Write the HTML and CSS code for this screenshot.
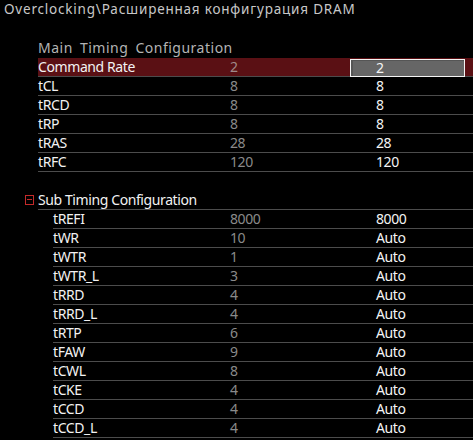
FILE: index.html
```html
<!DOCTYPE html>
<html>
<head>
<meta charset="utf-8">
<link rel="stylesheet" href="styles.css">
</head>
<body>
<div class="screen">
  <div class="title">Overclocking\Расширенная конфигурация DRAM</div>

  <section class="group main">
    <div class="main-head">Main Timing Configuration</div>
    <div class="row selected"><span class="name">Command Rate</span><span class="def">2</span><span class="cur"><span class="box">2</span></span></div>
    <div class="row"><span class="name">tCL</span><span class="def">8</span><span class="cur">8</span></div>
    <div class="row"><span class="name">tRCD</span><span class="def">8</span><span class="cur">8</span></div>
    <div class="row"><span class="name">tRP</span><span class="def">8</span><span class="cur">8</span></div>
    <div class="row"><span class="name">tRAS</span><span class="def">28</span><span class="cur">28</span></div>
    <div class="row"><span class="name">tRFC</span><span class="def">120</span><span class="cur">120</span></div>
  </section>

  <section class="group sub">
    <div class="sub-head"><span class="toggle"></span><span class="sub-title">Sub Timing Configuration</span></div>
    <div class="rows">
      <div class="row"><span class="name">tREFI</span><span class="def">8000</span><span class="cur">8000</span></div>
      <div class="row"><span class="name">tWR</span><span class="def">10</span><span class="cur">Auto</span></div>
      <div class="row"><span class="name">tWTR</span><span class="def">1</span><span class="cur">Auto</span></div>
      <div class="row"><span class="name">tWTR_L</span><span class="def">3</span><span class="cur">Auto</span></div>
      <div class="row"><span class="name">tRRD</span><span class="def">4</span><span class="cur">Auto</span></div>
      <div class="row"><span class="name">tRRD_L</span><span class="def">4</span><span class="cur">Auto</span></div>
      <div class="row"><span class="name">tRTP</span><span class="def">6</span><span class="cur">Auto</span></div>
      <div class="row"><span class="name">tFAW</span><span class="def">9</span><span class="cur">Auto</span></div>
      <div class="row"><span class="name">tCWL</span><span class="def">8</span><span class="cur">Auto</span></div>
      <div class="row"><span class="name">tCKE</span><span class="def">4</span><span class="cur">Auto</span></div>
      <div class="row"><span class="name">tCCD</span><span class="def">4</span><span class="cur">Auto</span></div>
      <div class="row"><span class="name">tCCD_L</span><span class="def">4</span><span class="cur">Auto</span></div>
    </div>
  </section>
</div>
</body>
</html>
```

FILE: styles.css
```css
html, body {
  margin: 0;
  padding: 0;
  background: #000;
}

.screen {
  width: 473px;
  height: 440px;
  overflow: hidden;
  background: #000;
  font-family: "Noto Sans", "Open Sans", sans-serif;
  font-size: 14px;
  letter-spacing: -0.4px;
  color: #f0f0f0;
}

.title {
  padding-left: 4px;
  height: 18px;
  line-height: 18px;
  font-size: 13.5px;
  letter-spacing: 0.8px;
  color: #c8c8c8;
  white-space: nowrap;
}

.main {
  margin-top: 20px;
  margin-left: 38px;
}

.main-head {
  height: 20px;
  line-height: 19px;
  color: #b4b4b4;
  letter-spacing: 0.5px;
  word-spacing: 3px;
}

.row {
  display: grid;
  height: 18px;
  line-height: 18px;
  border-bottom: 1px solid #4c4c4c;
  white-space: nowrap;
}

.main .row {
  grid-template-columns: 192px 120px 1fr;
}

.name {
  color: #f2f2f2;
}

.def {
  color: #8a8a8a;
}

.cur {
  padding-left: 26px;
  color: #f4f4f4;
}

.row.selected {
  background: #5a1014;
}

.row.selected .def {
  color: #a08a8a;
}

.row.selected .cur {
  padding-left: 0;
}

.box {
  display: block;
  box-sizing: border-box;
  width: 115px;
  height: 18px;
  margin-top: 1px;
  line-height: 16px;
  padding-left: 25px;
  border: 1px solid #f4f4f4;
  background: #666;
  box-shadow: inset 2px 1px 0 #555;
  color: #f4f4f4;
}

.sub {
  margin-top: 19px;
}

.sub-head {
  display: flex;
  align-items: flex-start;
  padding-left: 25px;
}

.toggle {
  position: relative;
  box-sizing: border-box;
  width: 9px;
  height: 10px;
  margin-top: 4px;
  margin-right: 4px;
  border: 1px solid #c42a2a;
}

.toggle::after {
  content: "";
  position: absolute;
  left: 1px;
  right: 1px;
  top: 3px;
  height: 1px;
  background: #c42a2a;
}

.sub-title {
  flex: 1;
  height: 18px;
  line-height: 18px;
  border-bottom: 1px solid #4c4c4c;
  color: #f2f2f2;
}

.sub .rows {
  margin-left: 53px;
}

.sub .row {
  grid-template-columns: 177px 120px 1fr;
}
```
